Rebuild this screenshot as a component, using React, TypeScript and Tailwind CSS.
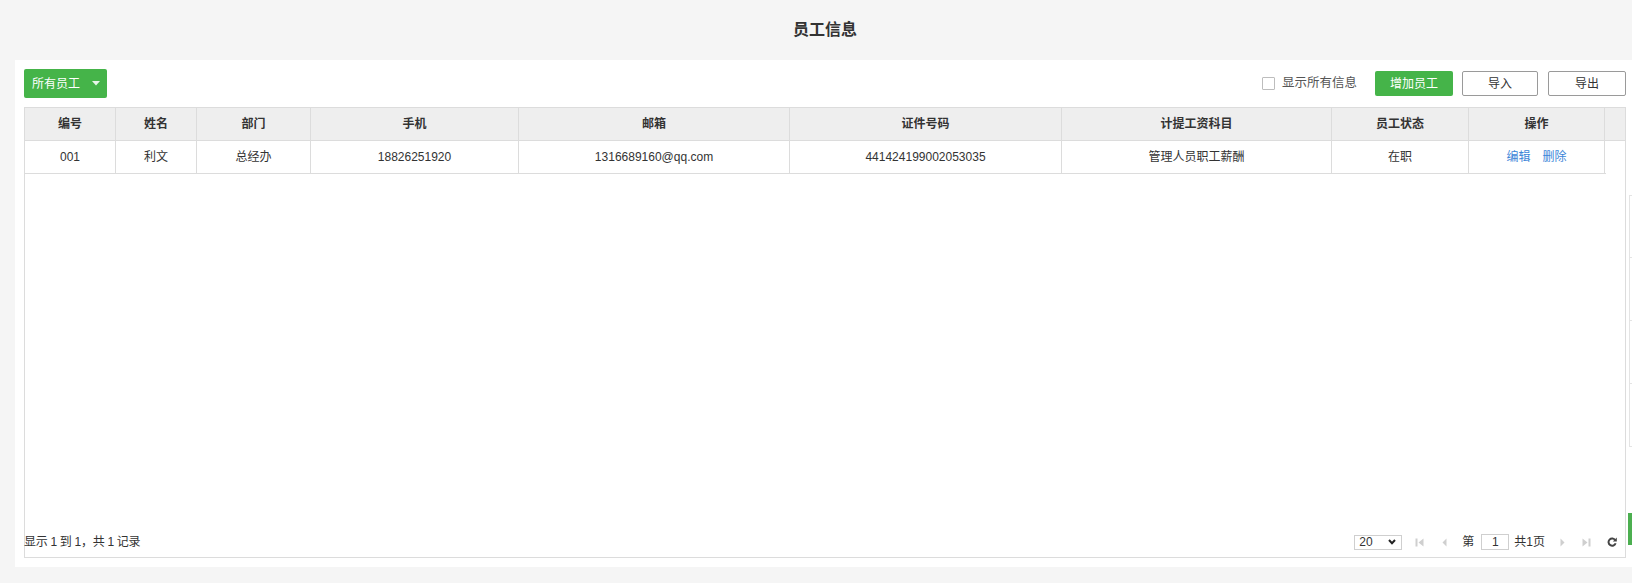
import React from 'react'

const columns = [
  { title: '编号', width: 'w-[91px]' },
  { title: '姓名', width: 'w-[81px]' },
  { title: '部门', width: 'w-[114px]' },
  { title: '手机', width: 'w-[208px]' },
  { title: '邮箱', width: 'w-[271px]' },
  { title: '证件号码', width: 'w-[272px]' },
  { title: '计提工资科目', width: 'w-[270px]' },
  { title: '员工状态', width: 'w-[137px]' },
  { title: '操作', width: 'w-[136px]' },
]

const rows = [
  {
    id: '001',
    name: '利文',
    dept: '总经办',
    phone: '18826251920',
    email: '1316689160@qq.com',
    idNo: '441424199002053035',
    account: '管理人员职工薪酬',
    status: '在职',
  },
]

function FirstIcon() {
  return (
    <svg width="9" height="9" viewBox="0 0 9 9" className="text-[#cfcfcf]">
      <rect x="0.5" y="0.5" width="2" height="8" fill="currentColor" />
      <path d="M8.5 0.5 L3.5 4.5 L8.5 8.5 Z" fill="currentColor" />
    </svg>
  )
}

function LastIcon() {
  return (
    <svg width="9" height="9" viewBox="0 0 9 9" className="text-[#cfcfcf]">
      <path d="M0.5 0.5 L5.5 4.5 L0.5 8.5 Z" fill="currentColor" />
      <rect x="6.5" y="0.5" width="2" height="8" fill="currentColor" />
    </svg>
  )
}

function PrevIcon() {
  return (
    <svg width="5" height="9" viewBox="0 0 5 9" className="text-[#cfcfcf]">
      <path d="M4.5 0.5 L0.5 4.5 L4.5 8.5 Z" fill="currentColor" />
    </svg>
  )
}

function NextIcon() {
  return (
    <svg width="5" height="9" viewBox="0 0 5 9" className="text-[#cfcfcf]">
      <path d="M0.5 0.5 L4.5 4.5 L0.5 8.5 Z" fill="currentColor" />
    </svg>
  )
}

function RefreshIcon() {
  return (
    <svg width="10" height="10" viewBox="0 0 10 10" className="text-[#444]">
      <path
        d="M8.2 3.2 A3.6 3.6 0 1 0 8.6 6.2"
        fill="none"
        stroke="currentColor"
        strokeWidth="2"
      />
      <path d="M9.8 0.6 L9.8 4.6 L5.8 4.6 Z" fill="currentColor" />
    </svg>
  )
}

export default function App() {
  return (
    <div className="relative h-[583px] w-full overflow-hidden bg-[#f5f5f5] font-['Liberation_Sans','Noto_Sans_CJK_SC',sans-serif] text-[#333]">
      <div className="w-[1650px]">
        {/* Title */}
        <h1 className="flex h-[60px] items-center justify-center text-[16px] font-bold text-[#333]">
          员工信息
        </h1>

        {/* Panel */}
        <div className="mx-[15px] bg-white p-[9px]">
          {/* Toolbar */}
          <div className="flex h-[29px] items-center justify-between">
            <button className="flex h-[29px] w-[83px] items-center rounded-[2px] bg-[#45b449] pl-[8px] text-[12px] text-white">
              所有员工
              <svg width="8" height="5" viewBox="0 0 8 5" className="ml-[12px]">
                <path d="M0 0 L8 0 L4 4.5 Z" fill="#e8f5e9" />
              </svg>
            </button>
            <div className="flex items-center">
              <span className="h-[13px] w-[13px] rounded-[1px] border border-[#bdbdbd] bg-white" />
              <span className="ml-[7px] text-[12.5px] text-[#555]">显示所有信息</span>
              <button className="ml-[18px] h-[25px] w-[78px] rounded-[2px] bg-[#45b449] text-[12px] text-white">
                增加员工
              </button>
              <button className="ml-[9px] h-[25px] w-[76px] rounded-[2px] border border-[#9a9a9a] bg-white text-[12px] text-[#333]">
                导入
              </button>
              <button className="ml-[10px] h-[25px] w-[78px] rounded-[2px] border border-[#9a9a9a] bg-white text-[12px] text-[#333]">
                导出
              </button>
            </div>
          </div>

          {/* Grid */}
          <div className="mt-[9px] flex h-[451px] flex-col border border-[#dcdcdc]">
            <div className="flex h-[33px] border-b border-[#dcdcdc] bg-[#eeeeee]">
              {columns.map(col => (
                <div
                  key={col.title}
                  className={`${col.width} flex shrink-0 items-center justify-center border-r border-[#dcdcdc] text-[12px] font-bold`}
                >
                  {col.title}
                </div>
              ))}
              <div className="flex-1" />
            </div>

            {rows.map(row => (
              <div key={row.id} className="flex h-[33px] w-[1581px] border-b border-[#dcdcdc] text-[12px]">
                <div className="flex w-[91px] shrink-0 items-center justify-center border-r border-[#dcdcdc]">{row.id}</div>
                <div className="flex w-[81px] shrink-0 items-center justify-center border-r border-[#dcdcdc]">{row.name}</div>
                <div className="flex w-[114px] shrink-0 items-center justify-center border-r border-[#dcdcdc]">{row.dept}</div>
                <div className="flex w-[208px] shrink-0 items-center justify-center border-r border-[#dcdcdc]">{row.phone}</div>
                <div className="flex w-[271px] shrink-0 items-center justify-center border-r border-[#dcdcdc]">{row.email}</div>
                <div className="flex w-[272px] shrink-0 items-center justify-center border-r border-[#dcdcdc]">{row.idNo}</div>
                <div className="flex w-[270px] shrink-0 items-center justify-center border-r border-[#dcdcdc]">{row.account}</div>
                <div className="flex w-[137px] shrink-0 items-center justify-center border-r border-[#dcdcdc]">{row.status}</div>
                <div className="flex w-[136px] shrink-0 items-center justify-center gap-[12px] border-r border-[#dcdcdc] text-[#3c85d8]">
                  <span>编辑</span>
                  <span>删除</span>
                </div>
              </div>
            ))}

            <div className="flex-1" />

            {/* Footer / pager */}
            <div className="flex h-[30px] items-center justify-between pr-[8px] text-[12px]">
              <span className="-ml-px tracking-[-0.3px]">显示 1 到 1，共 1 记录</span>
              <div className="flex items-center">
                <div className="flex h-[15px] w-[48px] items-center justify-between border border-[#cfcfcf] pl-[4px] pr-[5px] text-[12px] leading-none">
                  <span>20</span>
                  <svg width="8" height="6" viewBox="0 0 8 6">
                    <path d="M1 1 L4 4.2 L7 1" fill="none" stroke="#222" strokeWidth="2" />
                  </svg>
                </div>
                <span className="ml-[13px] flex"><FirstIcon /></span>
                <span className="ml-[18px] flex"><PrevIcon /></span>
                <span className="ml-[15px]">第</span>
                <span className="ml-[7px] flex h-[16px] w-[28px] items-center justify-center border border-[#cfcfcf]">1</span>
                <span className="ml-[5px]">共1页</span>
                <span className="ml-[15px] flex"><NextIcon /></span>
                <span className="ml-[17px] flex"><LastIcon /></span>
                <span className="ml-[16px] flex"><RefreshIcon /></span>
              </div>
            </div>
          </div>
        </div>
      </div>

      {/* Edge of a side toolbar cut off by the window */}
      <div className="absolute left-[1629px] top-[195px] flex w-[10px] flex-col border-l border-[#e4e4e4]">
        <div className="h-[63px] border-b border-t border-[#e4e4e4]" />
        <div className="h-[63px] border-b border-[#e4e4e4]" />
        <div className="h-[63px] border-b border-[#e4e4e4]" />
        <div className="h-[63px] border-b border-[#e4e4e4]" />
      </div>
      <div className="absolute left-[1628px] top-[513px] h-[32px] w-[6px] bg-[#4caf50]" />
    </div>
  )
}
